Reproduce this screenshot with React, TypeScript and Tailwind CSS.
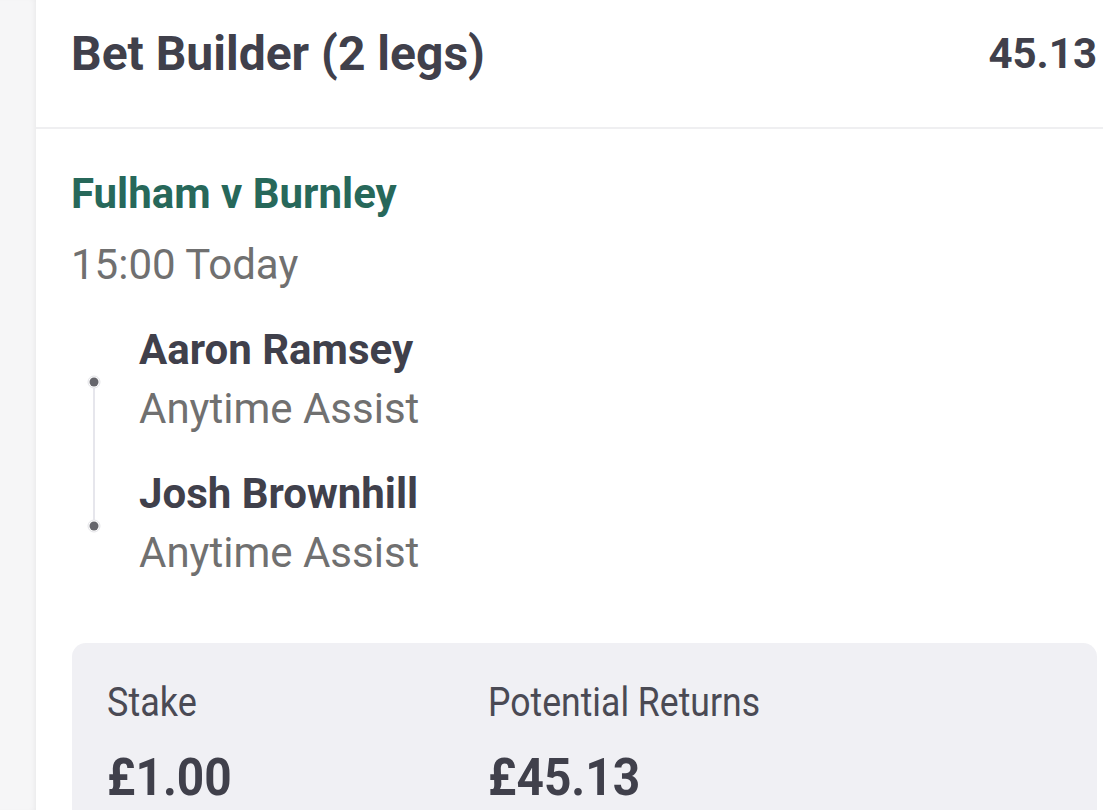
import React from 'react';

const legs = [
  { player: 'Aaron Ramsey', market: 'Anytime Assist' },
  { player: 'Josh Brownhill', market: 'Anytime Assist' },
];

const LegTimeline = () => (
  <svg width="68" height="251" viewBox="0 0 68 251" className="shrink-0">
    <line x1="23" y1="56" x2="23" y2="200" stroke="#e6e6ec" strokeWidth="2" />
    <circle cx="23" cy="56" r="6" fill="#ffffff" stroke="#e4e4e8" strokeWidth="1" />
    <circle cx="23" cy="56" r="4.5" fill="#66666c" />
    <circle cx="23" cy="200" r="6" fill="#ffffff" stroke="#e4e4e8" strokeWidth="1" />
    <circle cx="23" cy="200" r="4.5" fill="#66666c" />
  </svg>
);

const App = () => {
  return (
    <div className="flex h-[810px] w-full overflow-hidden bg-white font-['Roboto',sans-serif]">
      <div className="w-[36px] shrink-0 bg-[#f6f6f7] shadow-[inset_-4px_0_6px_-4px_rgba(0,0,0,0.08)]" />

      <div className="flex-1 bg-white">
        {/* header */}
        <div className="flex h-[129px] items-center justify-between border-b-2 border-[#efeff1] pb-[19px] pl-[35px] pr-[6px]">
          <h1 className="text-[48px] font-bold leading-[56px] text-[#40404b]">Bet Builder (2 legs)</h1>
          <span className="text-[42px] font-bold leading-[56px] text-[#40404b]">45.13</span>
        </div>

        <div className="pl-[35px] pr-[6px]">
          <div className="mt-[41px] text-[42px] font-bold leading-[48px] text-[#27685a]">Fulham v Burnley</div>
          <div className="mt-[23px] text-[42px] leading-[48px] text-[#707070]">15:00 Today</div>

          <div className="mt-[37px] flex">
            <LegTimeline />
            <div>
              {legs.map((leg, i) => (
                <div key={leg.player} className={i > 0 ? 'mt-[37px]' : ''}>
                  <div className="text-[42px] font-bold leading-[48px] text-[#40404b]">{leg.player}</div>
                  <div className="mt-[11px] text-[42px] leading-[48px] text-[#707070]">{leg.market}</div>
                </div>
              ))}
            </div>
          </div>

          <div className="ml-[1px] mt-[66px] h-[200px] rounded-t-[14px] bg-[#f0f0f4] pl-[35px] pt-[40px]">
            <div className="grid grid-cols-[381px_1fr]">
              <div>
                <div className="origin-left scale-x-[0.9] text-[40px] leading-[40px] text-[#4a4a54]">Stake</div>
                <div className="mt-[25px] origin-left scale-x-[0.92] text-[52px] font-bold leading-[60px] text-[#40404b]">£1.00</div>
              </div>
              <div>
                <div className="origin-left scale-x-[0.89] text-[40px] leading-[40px] text-[#4a4a54]">Potential Returns</div>
                <div className="mt-[25px] origin-left scale-x-[0.92] text-[52px] font-bold leading-[60px] text-[#40404b]">£45.13</div>
              </div>
            </div>
          </div>
        </div>
      </div>
    </div>
  );
};

export default App;
